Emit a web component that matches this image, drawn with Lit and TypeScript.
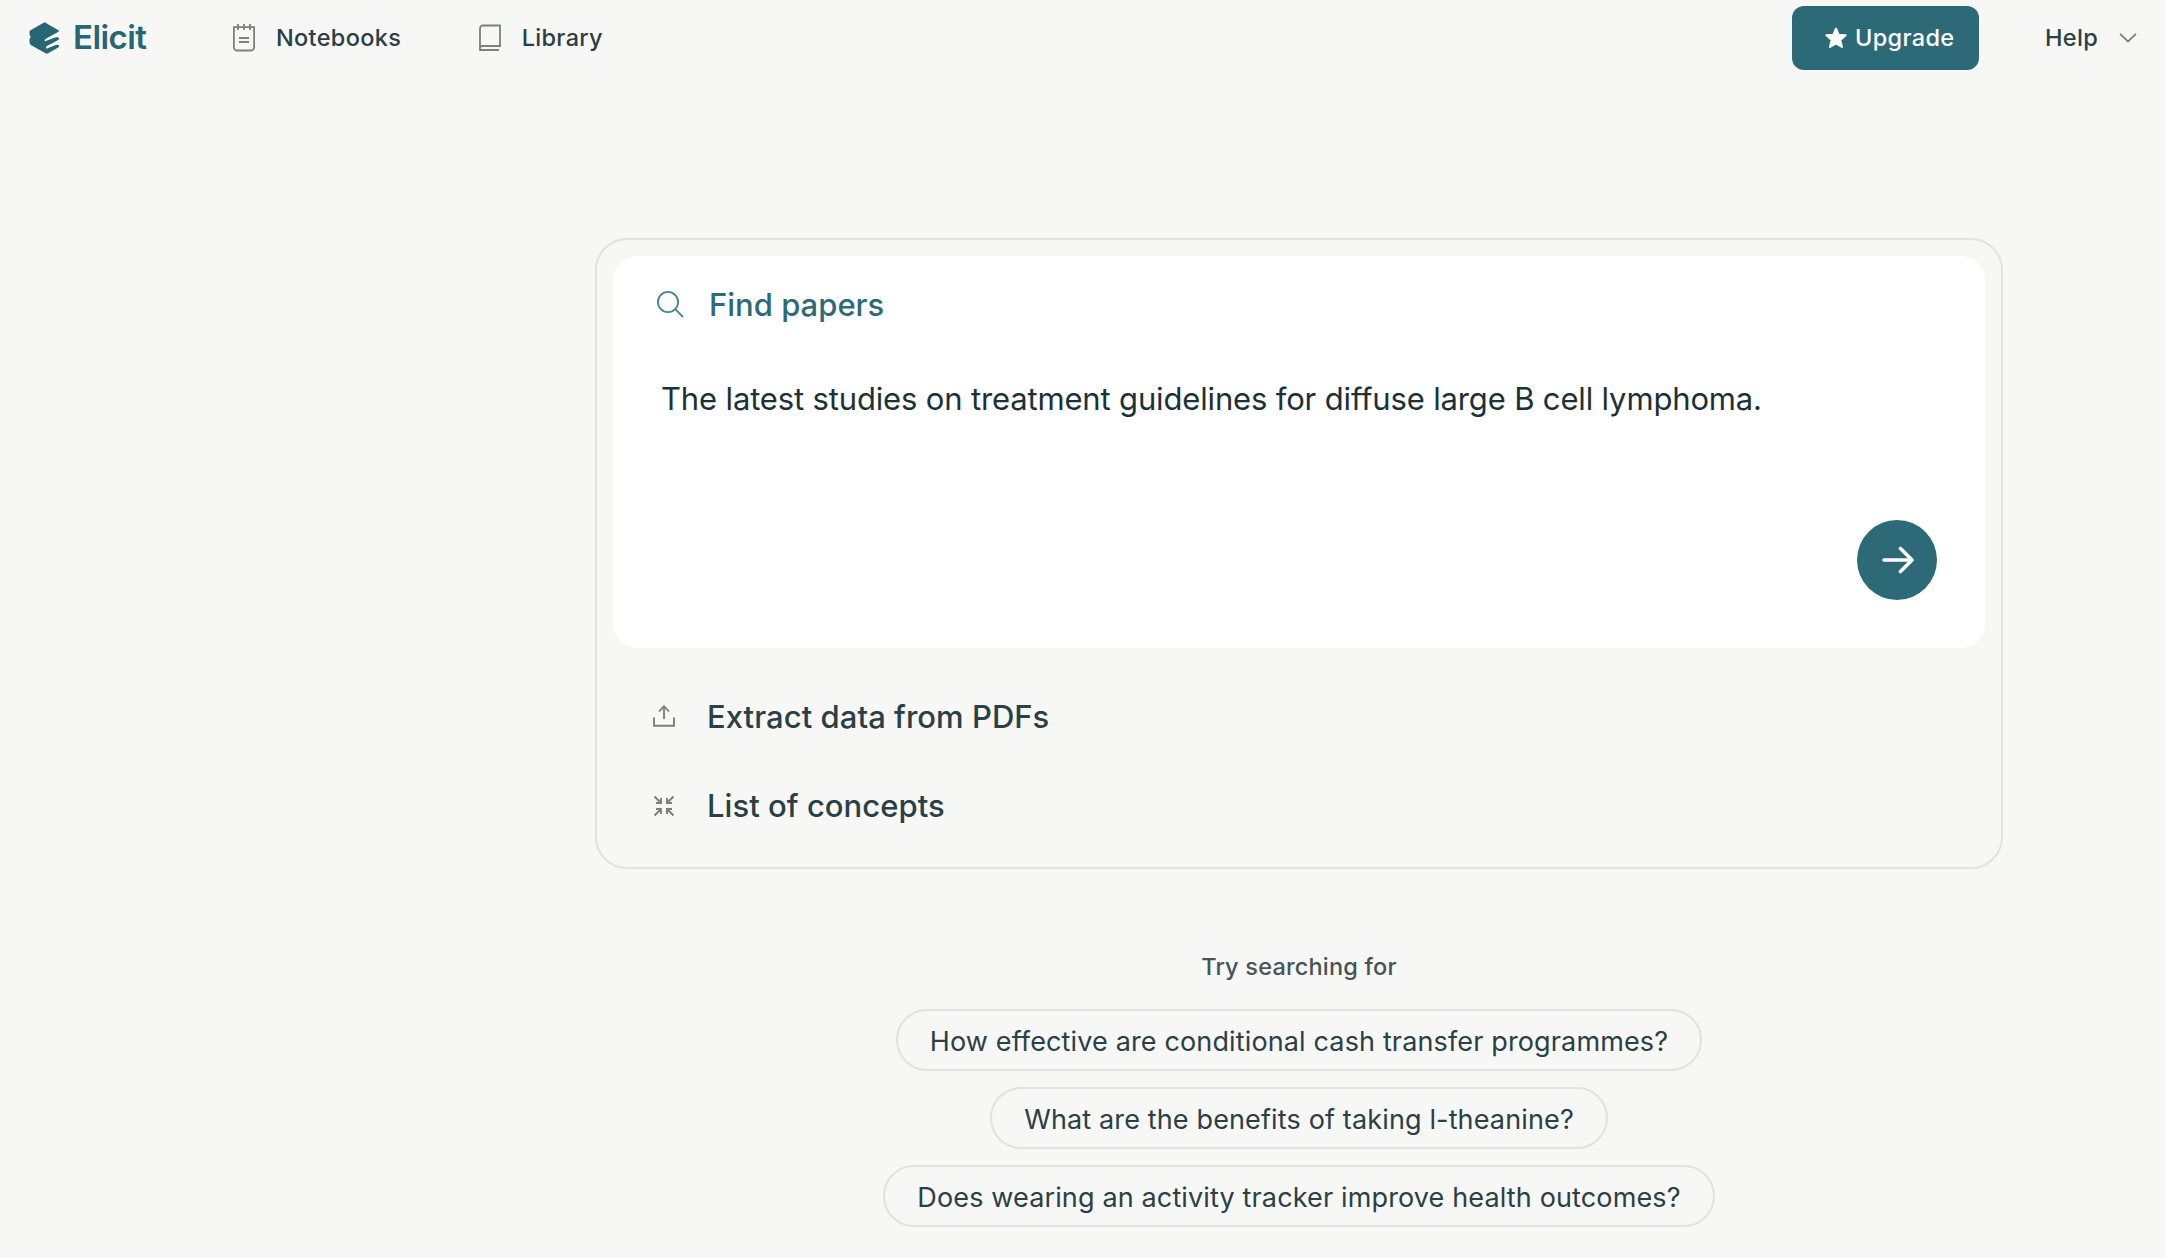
import { LitElement, html, css, svg } from 'lit';
import { customElement, state } from 'lit/decorators.js';

const logo = svg`
  <path
    d="M46 1 L88 25 Q91 27 88 29 L50 50 Q45 53 46 56 L48 58 L80 46 Q88 44 90 49 Q90 52 86 55 L52 73 Q49 76 51 80 L80 69 Q88 67 90 72 Q90 75 86 77 L57 94 Q53 96 49 94 L5 69 Q1 66 1 60 V53 Q1 48 5 44 Q1 41 1 35 V29 Q1 27 4 25 Z"
  />`;

/**
 * Top bar with the brand, the main links and the account actions.
 *
 * @element elicit-header
 */
@customElement('elicit-header')
export class ElicitHeader extends LitElement {
  static styles = css`
    :host {
      display: block;
      color: #2a4046;
      font-size: 23.5px;
      font-weight: 500;
      line-height: 32px;
      letter-spacing: 0.32px;
    }

    .bar {
      display: flex;
      align-items: center;
      height: 76px;
      box-sizing: border-box;
      padding: 0 29px 0 29px;
    }

    .brand {
      display: flex;
      align-items: center;
      gap: 13px;
      width: 203px;
      color: #286673;
      font-size: 33px;
      font-weight: 600;
      letter-spacing: -0.55px;
    }

    .name {
      margin-top: -2px;
    }

    .link {
      display: flex;
      align-items: center;
      gap: 20px;
      margin-right: 76.5px;
    }

    .link svg,
    .help svg {
      fill: none;
      stroke: #7b807e;
      stroke-width: 1.8;
    }

    .upgrade {
      display: flex;
      align-items: center;
      gap: 8px;
      box-sizing: border-box;
      width: 187px;
      height: 64px;
      margin-left: auto;
      padding-left: 33px;
      border-radius: 12px;
      background: #2d6a77;
      color: #fff;
    }

    .help {
      display: flex;
      align-items: center;
      gap: 21px;
      margin-left: 66px;
    }
  `;

  render() {
    return html`
      <div class="bar">
        <div class="brand">
          <svg width="31" height="32" viewBox="0 0 92 96" fill="currentColor">${logo}</svg>
          <span class="name">Elicit</span>
        </div>
        <div class="link">
          <svg width="24" height="28" viewBox="0 0 24 28">
            <path d="M1.9 3.2H22.1V23.5a3 3 0 0 1-3 3H4.9a3 3 0 0 1-3-3ZM6 0V6M12 0V6M18 0V6M7 14H17M7 18H17" />
          </svg>
          <span>Notebooks</span>
        </div>
        <div class="link">
          <svg width="24" height="28" viewBox="0 0 24 28">
            <path d="M21 26H2V4.5a3 3 0 0 1 3-3H22V22H4a2 2 0 0 0-2 2V26" />
          </svg>
          <span>Library</span>
        </div>
        <div class="upgrade">
          <svg width="22" height="22" viewBox="0 0 22 22" fill="#fff" stroke="#fff" stroke-width="2" stroke-linejoin="round">
            <path d="M11 1.6 13.6 7.7 20.6 8.3 15.3 12.9 17 20 11 16.4 5 20 6.7 12.9 1.4 8.3 8.4 7.7Z" />
          </svg>
          <span>Upgrade</span>
        </div>
        <div class="help">
          <span>Help</span>
          <svg width="18" height="10" viewBox="0 0 18 10"><path d="M1 .8 9 8.5 17 .8" /></svg>
        </div>
      </div>
    `;
  }
}

/**
 * Card with the question box and the other workflows below it.
 *
 * @element elicit-search-card
 */
@customElement('elicit-search-card')
export class ElicitSearchCard extends LitElement {
  @state()
  private query = 'The latest studies on treatment guidelines for diffuse large B cell lymphoma.';

  static styles = css`
    :host {
      display: block;
      color: #2a4046;
      font-size: 31px;
      line-height: 40px;
    }

    .card {
      box-sizing: border-box;
      width: 1408px;
      height: 631px;
      padding: 16px;
      border: 2px solid #e1e2e0;
      border-radius: 32px;
    }

    .panel {
      display: flex;
      flex-direction: column;
      box-sizing: border-box;
      height: 392px;
      padding: 28px 48px 48px 44px;
      border-radius: 24px;
      background: #fff;
    }

    .mode {
      display: flex;
      align-items: center;
      gap: 25px;
      color: #2d6a77;
      font-weight: 500;
      line-height: 42px;
    }

    .mode svg {
      margin-bottom: 2px;
    }

    .query {
      margin: 53px 0 0 4px;
      color: #1b3136;
      letter-spacing: -0.152px;
      white-space: nowrap;
    }

    .submit {
      display: flex;
      align-items: center;
      justify-content: center;
      width: 80px;
      height: 80px;
      margin: auto 0 0 auto;
      padding: 0 0 0 2px;
      border: 0;
      border-radius: 50%;
      background: #2d6a77;
    }

    .options {
      display: flex;
      flex-direction: column;
      gap: 49px;
      padding: 49px 40px 0;
      font-weight: 500;
      letter-spacing: 0.04px;
    }

    .option {
      display: flex;
      align-items: center;
      gap: 32px;
    }

    svg {
      display: block;
      fill: none;
    }

    .option svg {
      stroke: #7b807e;
      stroke-width: 1.9;
    }

    .upload {
      margin-bottom: 3px;
    }
  `;

  render() {
    return html`
      <div class="card">
        <div class="panel">
          <div class="mode">
            <svg width="27" height="27" viewBox="0 0 27 27" stroke="#468591" stroke-width="1.8">
              <circle cx="11" cy="11" r="10.1" />
              <path d="M18.2 18.2 26 26" />
            </svg>
            <span>Find papers</span>
          </div>
          <div class="query">${this.query}</div>
          <button class="submit" aria-label="Search">
            <svg width="32" height="28" viewBox="0 0 32 28" stroke="#fff" stroke-width="3.6" stroke-linecap="round" stroke-linejoin="round">
              <path d="M2 14H30M18.5 2.5 30 14 18.5 25.5" />
            </svg>
          </button>
        </div>
        <div class="options">
          <div class="option">
            <svg class="upload" width="22" height="22" viewBox="0 0 22 22">
              <path d="M1 12.5V20.8H21V12.5M11 14V1.4M6 6.4 11 1.4 16 6.4" />
            </svg>
            <span>Extract data from PDFs</span>
          </div>
          <div class="option">
            <svg width="22" height="22" viewBox="0 0 22 22">
              <path d="M1.5 1.5 8 8M8 3V8H3M20.5 1.5 14 8M14 3V8H19M1.5 20.5 8 14M8 19V14H3M20.5 20.5 14 14M14 19V14H19" />
            </svg>
            <span>List of concepts</span>
          </div>
        </div>
      </div>
    `;
  }
}

@customElement('app-root')
export class AppRoot extends LitElement {
  private suggestions = [
    'How effective are conditional cash transfer programmes?',
    'What are the benefits of taking l-theanine?',
    'Does wearing an activity tracker improve health outcomes?',
  ];

  static styles = css`
    :host {
      display: block;
      min-height: 100vh;
      background: #f7f7f5;
      font-family: Inter, 'Liberation Sans', sans-serif;
    }

    .main {
      display: flex;
      flex-direction: column;
      align-items: center;
      padding: 162px 0 0 432px;
    }

    .suggestions {
      display: flex;
      flex-direction: column;
      align-items: center;
      gap: 16px;
      margin-top: 82px;
      color: #2a4046;
    }

    .caption {
      margin-bottom: 10px;
      color: #475457;
      font-size: 23.5px;
      font-weight: 500;
      line-height: 32px;
      letter-spacing: 0.2px;
    }

    .pill {
      box-sizing: border-box;
      height: 62px;
      padding: 0 32px;
      border: 2px solid #e1e2e0;
      border-radius: 31px;
      font-size: 27px;
      line-height: 61px;
      letter-spacing: 0.14px;
      white-space: nowrap;
    }
  `;

  render() {
    return html`
      <elicit-header></elicit-header>
      <div class="main">
        <elicit-search-card></elicit-search-card>
        <div class="suggestions">
          <div class="caption">Try searching for</div>
          ${this.suggestions.map((text) => html`<div class="pill">${text}</div>`)}
        </div>
      </div>
    `;
  }
}

declare global {
  interface HTMLElementTagNameMap {
    'app-root': AppRoot;
    'elicit-header': ElicitHeader;
    'elicit-search-card': ElicitSearchCard;
  }
}
